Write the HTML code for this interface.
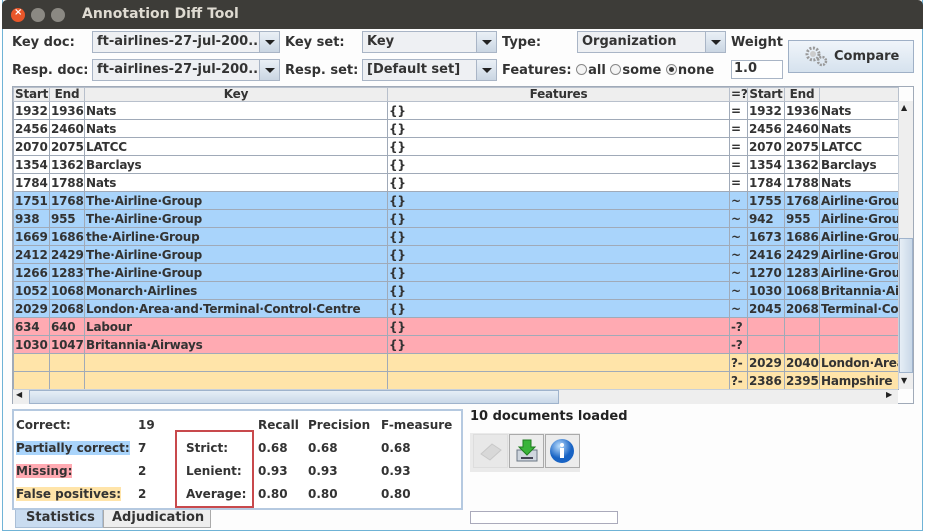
<!DOCTYPE html>
<html><head><meta charset="utf-8"><style>
*{box-sizing:border-box;margin:0;padding:0}
body{width:933px;height:532px;background:#fff;font-family:"DejaVu Sans","Liberation Sans",sans-serif;font-size:12px;font-weight:bold;color:#333;position:relative;overflow:hidden}
.a{position:absolute;white-space:nowrap}
#win{position:absolute;left:2px;top:0;width:921px;height:531px;border:1px solid #6fb3d6;border-top:none;background:#fdfdfd}
#title{position:absolute;left:2px;top:0;width:921px;height:29px;background:#3d3c38;border-radius:5px 5px 0 0}
.circ{position:absolute;top:8px;width:14px;height:14px;border-radius:50%}
.combo{position:absolute;height:22px;border:1px solid #a9b5c6;background:#eef0f3;font-size:13px;padding:2px 4px;color:#333}
.combo .ar{position:absolute;right:0;top:0;width:20px;height:20px;border-left:1px solid #a9b5c6;background:linear-gradient(#eaf0f6,#cad6e3)}
.combo .ar:after{content:"";position:absolute;left:5px;top:8px;border-left:5px solid transparent;border-right:5px solid transparent;border-top:5px solid #222}
.lbl{position:absolute;font-size:13px;color:#333}
table{position:absolute;left:13px;top:87px;border-collapse:collapse;table-layout:fixed;width:885px}
td{border:1px solid #a0aab8;height:18px;font-size:12px;padding:0 1px;overflow:hidden;white-space:nowrap;line-height:16px;letter-spacing:-0.2px}
tr.h td{background:#eeeeee;text-align:center;height:14px;line-height:13px;border-color:#b8c0cc}
tr.w td{background:#fff}
tr.b td{background:#a9d4fb}
tr.p td{background:#ffaab2}
tr.y td{background:#ffe4a9}
.rb{display:inline-block;width:11px;height:11px;border:1px solid #888;border-radius:50%;vertical-align:-1px;background:#f4f4f4;margin-right:1px}
.sel:after{content:"";display:block;width:5px;height:5px;background:#333;border-radius:50%;margin:2px}
</style></head><body>
<div id="win"></div>
<div id="title"></div>
<div class="circ" style="left:11px;background:#e9572a"></div>
<div class="a" style="left:14px;top:7px;color:#fff;font-size:10px">×</div>
<div class="circ" style="left:31px;background:#8b8983"></div>
<div class="circ" style="left:51px;background:#8b8983"></div>
<div class="a" style="left:82px;top:6px;color:#dfdbd2;font-size:14px">Annotation Diff Tool</div>

<div class="lbl" style="left:12px;top:35px">Key doc:</div>
<div class="lbl" style="left:12px;top:63px">Resp. doc:</div>
<div class="combo" style="left:92px;top:31px;width:188px">ft-airlines-27-jul-200...<div class="ar"></div></div>
<div class="combo" style="left:92px;top:59px;width:188px">ft-airlines-27-jul-200...<div class="ar"></div></div>
<div class="lbl" style="left:285px;top:35px">Key set:</div>
<div class="lbl" style="left:285px;top:63px">Resp. set:</div>
<div class="combo" style="left:362px;top:31px;width:135px">Key<div class="ar"></div></div>
<div class="combo" style="left:362px;top:59px;width:135px">[Default set]<div class="ar"></div></div>
<div class="lbl" style="left:502px;top:35px">Type:</div>
<div class="combo" style="left:577px;top:31px;width:149px">Organization<div class="ar"></div></div>
<div class="lbl" style="left:502px;top:63px">Features: <span class="rb"></span>all <span class="rb"></span>some <span class="rb sel"></span>none</div>
<div class="lbl" style="left:731px;top:35px">Weight</div>
<div class="a" style="left:731px;top:60px;width:52px;height:19px;border:1px solid #a9b5c6;background:#fff;font-size:13px;padding:0 2px">1.0</div>
<div class="a" style="left:788px;top:40px;width:126px;height:33px;border:1px solid #9fb0c6;background:linear-gradient(#f0f5fa,#d6e2ee);font-size:13px;padding:8px 0 0 45px">Compare</div>
<svg class="a" style="left:804px;top:45px" width="26" height="24"><circle cx="9" cy="9" r="6" fill="none" stroke="#999" stroke-width="3" stroke-dasharray="2 1.5"/><circle cx="9" cy="9" r="3" fill="#ccc"/><circle cx="18" cy="16" r="4" fill="none" stroke="#999" stroke-width="2.5" stroke-dasharray="2 1.2"/></svg>

<table>
<colgroup><col style="width:36px"><col style="width:35px"><col style="width:303px"><col style="width:342px"><col style="width:18px"><col style="width:37px"><col style="width:35px"><col style="width:79px"></colgroup>
<tr class="h"><td>Start</td><td>End</td><td>Key</td><td>Features</td><td>=?</td><td>Start</td><td>End</td><td></td></tr>
<tr class="w"><td>1932</td><td>1936</td><td>Nats</td><td>{}</td><td>=</td><td>1932</td><td>1936</td><td>Nats</td></tr>
<tr class="w"><td>2456</td><td>2460</td><td>Nats</td><td>{}</td><td>=</td><td>2456</td><td>2460</td><td>Nats</td></tr>
<tr class="w"><td>2070</td><td>2075</td><td>LATCC</td><td>{}</td><td>=</td><td>2070</td><td>2075</td><td>LATCC</td></tr>
<tr class="w"><td>1354</td><td>1362</td><td>Barclays</td><td>{}</td><td>=</td><td>1354</td><td>1362</td><td>Barclays</td></tr>
<tr class="w"><td>1784</td><td>1788</td><td>Nats</td><td>{}</td><td>=</td><td>1784</td><td>1788</td><td>Nats</td></tr>
<tr class="b"><td>1751</td><td>1768</td><td>The·Airline·Group</td><td>{}</td><td>~</td><td>1755</td><td>1768</td><td>Airline·Group</td></tr>
<tr class="b"><td>938</td><td>955</td><td>The·Airline·Group</td><td>{}</td><td>~</td><td>942</td><td>955</td><td>Airline·Group</td></tr>
<tr class="b"><td>1669</td><td>1686</td><td>the·Airline·Group</td><td>{}</td><td>~</td><td>1673</td><td>1686</td><td>Airline·Group</td></tr>
<tr class="b"><td>2412</td><td>2429</td><td>The·Airline·Group</td><td>{}</td><td>~</td><td>2416</td><td>2429</td><td>Airline·Group</td></tr>
<tr class="b"><td>1266</td><td>1283</td><td>The·Airline·Group</td><td>{}</td><td>~</td><td>1270</td><td>1283</td><td>Airline·Group</td></tr>
<tr class="b"><td>1052</td><td>1068</td><td>Monarch·Airlines</td><td>{}</td><td>~</td><td>1030</td><td>1068</td><td>Britannia·Airways</td></tr>
<tr class="b"><td>2029</td><td>2068</td><td>London·Area·and·Terminal·Control·Centre</td><td>{}</td><td>~</td><td>2045</td><td>2068</td><td>Terminal·Control</td></tr>
<tr class="p"><td>634</td><td>640</td><td>Labour</td><td>{}</td><td>-?</td><td></td><td></td><td></td></tr>
<tr class="p"><td>1030</td><td>1047</td><td>Britannia·Airways</td><td>{}</td><td>-?</td><td></td><td></td><td></td></tr>
<tr class="y"><td></td><td></td><td></td><td></td><td>?-</td><td>2029</td><td>2040</td><td>London·Area</td></tr>
<tr class="y"><td></td><td></td><td></td><td></td><td>?-</td><td>2386</td><td>2395</td><td>Hampshire</td></tr>
</table>
<div class="a" style="left:12px;top:86px;width:902px;height:318px;border:1px solid #a0aab8"></div>
<div class="a" style="left:898px;top:101px;width:15px;height:288px;background:#eee;border-left:1px solid #c8d0da"></div>
<div class="a" style="left:899px;top:238px;width:14px;height:135px;background:linear-gradient(90deg,#e6eef6,#c9d8e8);border:1px solid #9fb3cc"></div>
<div class="a" style="left:901px;top:103px;font-size:8px;color:#222">▲</div>
<div class="a" style="left:901px;top:376px;font-size:8px;color:#222">▼</div>
<div class="a" style="left:13px;top:389px;width:885px;height:15px;background:#eee;border-top:1px solid #c8d0da"></div>
<div class="a" style="left:29px;top:390px;width:530px;height:14px;background:linear-gradient(#e6eef6,#c9d8e8);border:1px solid #9fb3cc"></div>
<div class="a" style="left:16px;top:390px;font-size:8px;color:#222">◀</div>
<div class="a" style="left:886px;top:390px;font-size:8px;color:#222">▶</div>

<div class="a" style="left:12px;top:409px;width:451px;height:101px;border:2px solid #b5c9e0;background:#fff"></div>
<div class="a" style="left:16px;top:418px">Correct:</div><div class="a" style="left:138px;top:418px">19</div>
<div class="a" style="left:16px;top:441px;background:#a9d4fb">Partially correct:</div><div class="a" style="left:138px;top:441px">7</div>
<div class="a" style="left:16px;top:464px;background:#ffaab2">Missing:</div><div class="a" style="left:138px;top:464px">2</div>
<div class="a" style="left:16px;top:487px;background:#ffe4a9">False positives:</div><div class="a" style="left:138px;top:487px">2</div>
<div class="a" style="left:175px;top:430px;width:79px;height:78px;border:2px solid #c8494c"></div>
<div class="a" style="left:186px;top:441px">Strict:</div>
<div class="a" style="left:186px;top:464px">Lenient:</div>
<div class="a" style="left:186px;top:487px">Average:</div>
<div class="a" style="left:258px;top:418px">Recall</div><div class="a" style="left:308px;top:418px">Precision</div><div class="a" style="left:381px;top:418px">F-measure</div>
<div class="a" style="left:258px;top:441px">0.68</div><div class="a" style="left:308px;top:441px">0.68</div><div class="a" style="left:381px;top:441px">0.68</div>
<div class="a" style="left:258px;top:464px">0.93</div><div class="a" style="left:308px;top:464px">0.93</div><div class="a" style="left:381px;top:464px">0.93</div>
<div class="a" style="left:258px;top:487px">0.80</div><div class="a" style="left:308px;top:487px">0.80</div><div class="a" style="left:381px;top:487px">0.80</div>
<div class="a" style="left:15px;top:510px;width:88px;height:18px;background:#c9dcf0;border:1px solid #a9bed6;border-top:none;font-size:13px;padding:0 0 0 10px">Statistics</div>
<div class="a" style="left:103px;top:510px;width:108px;height:18px;background:#eee;border:1px solid #aaa;border-top:none;font-size:13px;padding:0 0 0 8px">Adjudication</div>

<div class="a" style="left:470px;top:409px;font-size:13px;color:#222">10 documents loaded</div>
<div class="a" style="left:470px;top:433px;width:110px;height:39px;background:#eaeaea"></div>
<div class="a" style="left:473px;top:434px;width:35px;height:34px;border:1px solid #ddd;background:#e8e8e8"></div>
<svg class="a" style="left:478px;top:440px" width="26" height="22"><path d="M3 14 L14 4 L23 10 L12 20Z" fill="#d8d8d8" stroke="#c8c8c8"/></svg>
<div class="a" style="left:509px;top:434px;width:35px;height:34px;border:1px solid #aaa;background:#ececec"></div>
<svg class="a" style="left:514px;top:438px" width="26" height="26"><rect x="3" y="12" width="20" height="11" fill="#cfd6de" stroke="#6b7785"/><rect x="7" y="19" width="12" height="2" fill="#445"/><path d="M9 2h8v7h4l-8 8-8-8h4z" fill="#3ab43a" stroke="#1e7d1e"/></svg>
<div class="a" style="left:545px;top:434px;width:35px;height:34px;border:1px solid #aaa;background:#ececec"></div>
<svg class="a" style="left:549px;top:438px" width="26" height="26"><defs><radialGradient id="g" cx="40%" cy="30%"><stop offset="0" stop-color="#bde0ff"/><stop offset="1" stop-color="#1863c4"/></radialGradient></defs><circle cx="13" cy="13" r="12" fill="url(#g)"/><circle cx="13" cy="7" r="2" fill="#fff"/><rect x="11" y="10" width="4" height="10" fill="#fff"/></svg>
<div class="a" style="left:470px;top:511px;width:148px;height:13px;border:1px solid #aab;background:#fff"></div>
</body></html>
